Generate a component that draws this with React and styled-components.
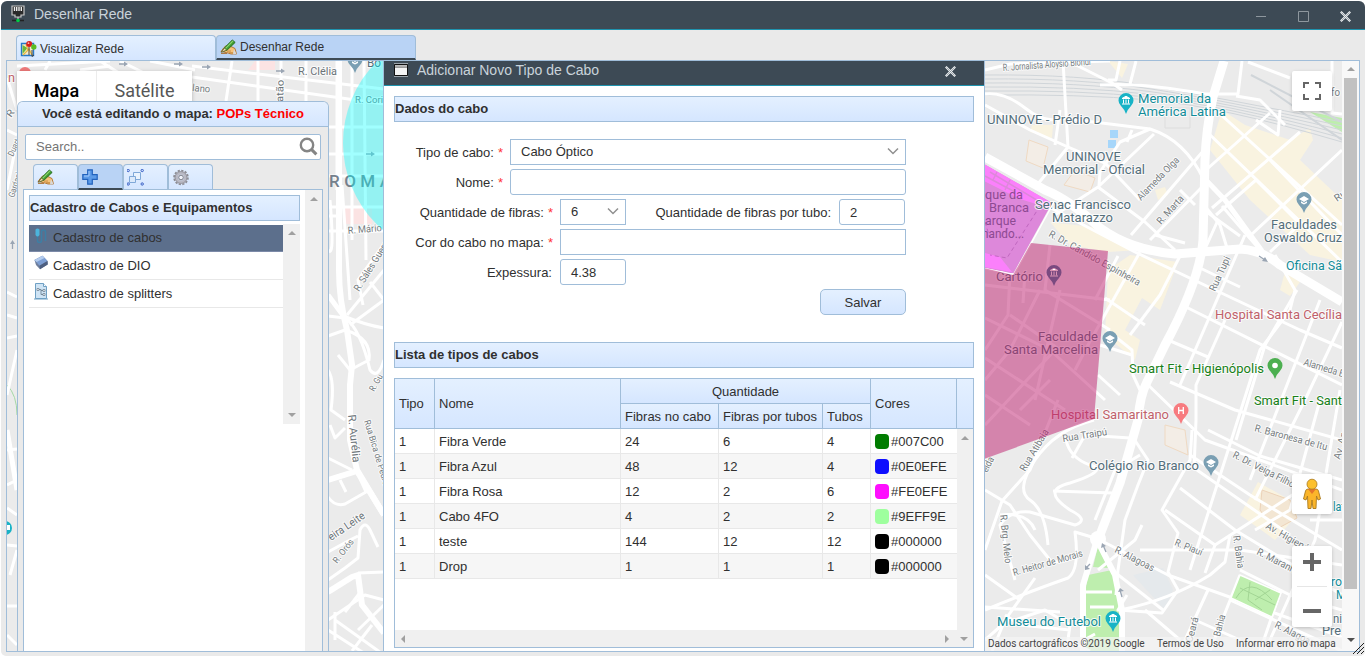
import React from "react";
import styled, { createGlobalStyle, css } from "styled-components";

const line = "#a0bdd9";
const dark = "#3d4a55";
const blueGrad = "linear-gradient(#e4f0ff, #d5e6ff)";

const Global = createGlobalStyle`
  * { box-sizing: border-box; }
  html, body { margin: 0; height: 656px; overflow: hidden; background: #fff; }
  body { font: 13px "Liberation Sans", Arial, sans-serif; color: #303030; }
  svg { display: block; flex: none; }
`;

/* ---------- window ---------- */
const Window = styled.div`
  display: flex;
  flex-direction: column;
  height: 655px;
  margin: 1px 0 0 1px;
  background: #eaeaea;
  border-radius: 6px 6px 5px 5px;
  overflow: hidden;
  position: relative;
`;
const TitleBar = styled.header`
  display: flex;
  align-items: center;
  height: 29px;
  padding: 0 14px 2px 10px;
  background: ${dark};
  border-bottom: 1px solid #1f93ae;
  color: #c9d3da;
  font-size: 14px;
`;
const TitleText = styled.span`
  flex: 1;
  padding-left: ${(p) => p.$gap}px;
`;
const WindowButtons = styled.div`
  display: flex;
  gap: 31px;
  padding-top: 4px;
`;
const TabStrip = styled.nav`
  display: flex;
  height: 30px;
  padding: 5px 0 0 15px;
`;
const Tab = styled.div`
  display: flex;
  align-items: center;
  gap: 3px;
  width: 200px;
  padding: ${(p) => (p.$active ? 0 : 1)}px 3px 0;
  font-size: 12px;
  background: ${(p) => (p.$active ? "#b9d3f5" : blueGrad)};
  border: 1px solid ${line};
  border-radius: 4px 4px 0 0;
  border-bottom: ${(p) => (p.$active ? `2px solid ${dark}` : "0")};
`;
const Content = styled.main`
  display: flex;
  height: 592px;
  margin: 0 5px;
  border: 1px solid ${line};
`;
const Viewport = styled.div`
  position: relative;
  flex: 1;
  overflow: hidden;
`;

/* ---------- scrollbars ---------- */
const VScroll = styled.div`
  display: flex;
  flex-direction: column;
  align-items: center;
  width: ${(p) => p.$w || 17}px;
  background: #f0f0f0;
  padding: 7px 0;
  justify-content: space-between;
`;
const HScroll = styled.div`
  display: flex;
  align-items: center;
  justify-content: space-between;
  height: 17px;
  padding: 0 5px 0 6px;
  background: #f0f0f0;
`;
const HScrollEnd = styled.div`
  display: flex;
  align-items: center;
  gap: 11px;
`;
const PageScroll = styled(VScroll)`
  background: #f8f8f8;
  justify-content: flex-start;
  padding: 6px 0;
`;
const Thumb = styled.div`
  width: 13px;
  height: 511px;
  margin: 7px 0 49px;
  background: #c1c1c1;
`;
const Arrow = styled.i`
  width: 0;
  height: 0;
  border: 4px solid transparent;
  ${(p) => p.$dir === "up" && css`border-top: 0; border-bottom-color: #a0a0a0;`}
  ${(p) => p.$dir === "down" && css`border-bottom: 0; border-top-color: ${p.$dark ? "#505050" : "#a0a0a0"};`}
  ${(p) => p.$dir === "left" && css`border-left: 0; border-right-color: #a0a0a0;`}
  ${(p) => p.$dir === "right" && css`border-right: 0; border-left-color: #a0a0a0;`}
`;

/* ---------- map controls ---------- */
const MapSvg = styled.svg`
  position: absolute;
  inset: 0;
  font-family: Roboto, sans-serif;
`;
const MapTypes = styled.div`
  position: absolute;
  left: 10px;
  top: 10px;
  display: flex;
  height: 40px;
  background: #fff;
  box-shadow: 0 1px 4px rgba(0, 0, 0, 0.25);
  font: 18px/39px Roboto, sans-serif;
`;
const MapType = styled.span`
  width: ${(p) => p.$w}px;
  text-align: center;
  color: ${(p) => (p.$on ? "#000" : "#565656")};
  font-weight: ${(p) => (p.$on ? 500 : 400)};
  border-right: ${(p) => (p.$on ? "1px solid #ececec" : "0")};
`;
const MapControls = styled.div`
  position: absolute;
  right: 10px;
  top: 10px;
  bottom: 24px;
  width: 40px;
  display: flex;
  flex-direction: column;
  justify-content: flex-end;
  gap: 32px;
`;
const ControlBox = styled.div`
  display: flex;
  flex-direction: column;
  align-items: center;
  justify-content: space-around;
  height: ${(p) => p.$h || 40}px;
  margin-bottom: ${(p) => (p.$first ? "auto" : 0)};
  background: #fff;
  border-radius: 2px;
  box-shadow: 0 1px 4px -1px rgba(0, 0, 0, 0.3);
`;
const ControlLine = styled.div`
  width: 30px;
  height: 1px;
  background: #e6e6e6;
`;
const Attribution = styled.footer`
  position: absolute;
  right: 0;
  bottom: 0;
  display: flex;
  width: 358px;
  height: 14px;
  background: rgba(245, 245, 245, 0.7);
  font: 10px/14px Roboto, sans-serif;
  letter-spacing: -0.02px;
  color: #444;
  white-space: nowrap;
`;
const Credit = styled.span`
  width: ${(p) => p.$w}px;
  padding-left: ${(p) => p.$pad}px;
`;

/* ---------- side panel ---------- */
const Side = styled.aside`
  position: absolute;
  left: 10px;
  top: 40px;
  width: 312px;
  height: 550px;
  display: flex;
  flex-direction: column;
  background: #eaeaea;
  border: 1px solid ${line};
  border-bottom: 0;
  border-radius: 6px 6px 0 0;
`;
const SideHeader = styled.div`
  height: 25px;
  line-height: 23px;
  text-align: center;
  font-weight: bold;
  background: ${blueGrad};
  border-bottom: 1px solid ${line};
  border-radius: 5px 5px 0 0;
`;
const MapName = styled.span`
  color: #f00;
`;
const Search = styled.div`
  display: flex;
  align-items: center;
  justify-content: space-between;
  height: 26px;
  margin: 7px 7px 4px;
  padding: 0 2px 1px 10px;
  color: #757575;
  background: #fff;
  border: 1px solid ${line};
  border-radius: 2px;
`;
const ToolTabs = styled.div`
  display: flex;
  height: 25px;
  margin-left: 15px;
`;
const ToolTab = styled.div`
  width: 45px;
  height: ${(p) => (p.$active ? 26 : 25)}px;
  padding: 4px 0 0 3px;
  background: ${(p) => (p.$active ? "#b9d3f5" : blueGrad)};
  border: 1px solid ${line};
  border-bottom: ${(p) => (p.$active ? `2px solid ${dark}` : "0")};
  border-radius: 4px 4px 0 0;
  position: relative;
  z-index: 1;
`;
const SideBody = styled.div`
  display: flex;
  flex: 1;
  margin: 0 5px;
  background: #fff;
  border: 1px solid ${line};
  border-bottom: 0;
`;
const SideMain = styled.div`
  flex: 1;
  padding: 5px 5px 0;
`;
const Heading = styled.h2`
  height: 26px;
  margin: 0;
  font-size: 13px;
  line-height: 24px;
  background: ${blueGrad};
  border: 1px solid ${line};
`;
const ListBox = styled.div`
  display: flex;
  height: 200px;
  margin-top: 3px;
`;
const List = styled.div`
  flex: 1;
  padding-top: 1px;
`;
const Item = styled.div`
  display: flex;
  gap: 4px;
  height: ${(p) => (p.$selected ? 27 : 28)}px;
  padding: 3px 0 0 4px;
  line-height: 19px;
  background: ${(p) => (p.$selected ? "#5c6f8c" : "#fff")};
  border-bottom: 1px solid ${(p) => (p.$selected ? "#7c8aa8" : "#e8e8e8")};
`;
const ItemText = styled.span`
  padding-top: ${(p) => (p.$selected ? 0 : 1)}px;
`;

/* ---------- dialog ---------- */
const Dialog = styled.section`
  position: absolute;
  left: 376px;
  top: 0;
  width: 602px;
  height: 590px;
  background: #fff;
  border: 1px solid ${line};
  border-width: 0 1px;
`;
const DialogBar = styled.div`
  display: flex;
  height: 25px;
  padding: 2px 28px 0 10px;
  background: ${dark};
  border-bottom: 1px solid #1f93ae;
  color: #c9d3da;
  font-size: 14px;
  line-height: 15px;
`;
const CloseSlot = styled.div`
  padding-top: 3px;
`;
const DialogBody = styled.div`
  padding: 10px;
`;
const Form = styled.div`
  display: flex;
  flex-direction: column;
  gap: 4px;
  width: 512px;
  margin: 17px 0 27px;
`;
const Row = styled.div`
  display: flex;
  height: 26px;
`;
const Label = styled.label`
  width: ${(p) => p.$w}px;
  padding-right: ${(p) => p.$pad || 7}px;
  line-height: 28px;
  text-align: right;
  white-space: nowrap;
`;
const Star = styled.span`
  padding-left: 4px;
  color: #f33;
`;
const Field = styled.div`
  display: flex;
  align-items: center;
  justify-content: space-between;
  width: ${(p) => p.$w}px;
  padding: 0 6px ${(p) => (p.$square ? 2 : 0)}px 10px;
  border: 1px solid ${line};
  border-radius: ${(p) => (p.$square ? 0 : 3)}px;
  background: #fff;
`;
const SaveButton = styled.button`
  width: 86px;
  height: 26px;
  margin-left: auto;
  padding: 0;
  font: inherit;
  color: inherit;
  background: ${blueGrad};
  border: 1px solid ${line};
  border-radius: 5px;
`;

/* ---------- grid ---------- */
const columns = "40px 186px 98px 104px 48px 86px";
const Grid = styled.div`
  display: flex;
  flex-direction: column;
  height: 270px;
  margin-top: 10px;
  border: 1px solid ${line};
`;
const GridHead = styled.div`
  display: grid;
  grid-template-columns: ${columns} 16px;
  grid-template-rows: 25px 25px;
  background: ${blueGrad};
`;
const HeadCell = styled.div`
  display: flex;
  align-items: center;
  justify-content: ${(p) => (p.$center ? "center" : "flex-start")};
  grid-column: ${(p) => p.$col};
  grid-row: ${(p) => p.$row};
  padding-left: ${(p) => (p.$center ? 0 : 4)}px;
  white-space: nowrap;
  background: ${(p) => (p.$sub ? blueGrad : "none")};
  border: solid ${line};
  border-width: 0 ${(p) => (p.$last ? 0 : 1)}px 1px 0;
`;
const GridBody = styled.div`
  display: flex;
  flex: 1;
`;
const GridRows = styled.div`
  width: 562px;
`;
const GridRow = styled.div`
  display: grid;
  grid-template-columns: ${columns};
  height: 25px;
  background: ${(p) => (p.$odd ? "#f6f6f6" : "#fff")};
`;
const Cell = styled.div`
  display: flex;
  align-items: center;
  gap: 2px;
  padding-left: 4px;
  border: solid #e8e8e8;
  border-width: 0 ${(p) => (p.$last ? 0 : 1)}px 1px 0;
`;
const Swatch = styled.span`
  width: 14px;
  height: 15px;
  border-radius: 4px;
  background: ${(p) => p.$color};
`;

const cables = [
  ["1", "Fibra Verde", "24", "6", "4", "#007C00"],
  ["1", "Fibra Azul", "48", "12", "4", "#0E0EFE"],
  ["1", "Fibra Rosa", "12", "2", "6", "#FE0EFE"],
  ["1", "Cabo 4FO", "4", "2", "2", "#9EFF9E"],
  ["1", "teste", "144", "12", "12", "#000000"],
  ["1", "Drop", "1", "1", "1", "#000000"],
];

/* ---------- icons ---------- */
const PortIcon = () => (
  <svg width="14" height="18" viewBox="0 0 14 18">
    <path d="M1 1h12v9h-3v2H4v-2H1z" fill="#2a2a2a" stroke="#c8c8c8" strokeWidth="1.2" />
    <path d="M3.5 2v4M5.7 2v4M8 2v4M10.3 2v4" stroke="#eee" strokeWidth="1.4" />
    <path d="M7 12v3" stroke="#ddd" />
    <path d="M1 15.5h12" stroke="#222" strokeWidth="1.3" />
    <circle cx="7" cy="15.5" r="1.8" fill="#0c4" />
  </svg>
);
const WinIcon = () => (
  <svg width="14" height="14" viewBox="0 0 14 14">
    <path d="M0 .5h14M0 13.5h14" stroke="#9aa3aa" />
    <path d="M.5 1.5h13v11H.5z" fill="#f4f4f4" stroke="#111" />
    <path d="M1 3h12" stroke="#aaa" strokeWidth="1.5" />
    <path d="M1 4.3h12" stroke="#555" strokeWidth=".7" />
  </svg>
);
const CloseIcon = () => (
  <svg width="11" height="11" viewBox="0 0 11 11">
    <path d="M.8 .8l9.400 9.400M10.200 .8L.8 10.200" stroke="#eef1f3" strokeWidth="2.200" />
    <path d="M1.500 1.500l8 8M9.500 1.500l-8 8" stroke="#8c959c" strokeWidth=".8" />
  </svg>
);
const Chevron = () => (
  <svg width="12" height="8" viewBox="0 0 12 8">
    <path d="M1 1.500l5 5 5-5" fill="none" stroke="#909090" strokeWidth="1.5" />
  </svg>
);
const MapPinsIcon = () => (
  <svg width="17" height="16" viewBox="0 0 17 16">
    <path d="M1.5 2.5h12v12h-12z" fill="#f4ead0" stroke="#2878c8" strokeWidth="1.4" />
    <path d="M2.5 4l5 3-5 6z" fill="#6cb83c" />
    <path d="M3 14l6-6 3 6M6 3l2 7" stroke="#e9b93c" fill="none" strokeWidth="1.2" />
    <path d="M9 14V6M14 14l-2 1.5V9" stroke="#444" fill="none" />
    <circle cx="9.2" cy="3" r="3" fill="#d8201e" />
    <circle cx="13.8" cy="6" r="2.7" fill="#5cbc22" />
    <circle cx="8.5" cy="2.2" r=".9" fill="#ffb0a8" />
  </svg>
);
const HandPencilIcon = () => (
  <svg width="17" height="16" viewBox="0 0 17 16">
    <path d="M1 12.500L4 8.500Q5.500 6.500 8 6.500L12 8l3 1.500 1.500 5.500H11L8 14z" fill="#f6c27a" stroke="#a8641c" strokeWidth=".8" />
    <path d="M7 12.200l4-.2M9 13.700h4" stroke="#b97a30" strokeWidth=".7" />
    <path d="M14 10l2.500 5-3.500.2z" fill="#d8d8d8" />
    <path d="M4.500 8.800L12.300.9l2.900 2.500L7 11.200l-5.500 1.800z" fill="#3f9c33" stroke="#1f6418" strokeWidth=".8" />
    <path d="M5.600 9.300l7.400-7.400" stroke="#8fd670" strokeWidth="1.100" />
    <path d="M1 13.300l3.500-4.100L6.600 11z" fill="#f3dfb4" stroke="#6b4a1c" strokeWidth=".5" />
    <path d="M1 14.500h6" stroke="#a8641c" strokeWidth=".8" />
  </svg>
);
const PlusIcon = () => (
  <svg width="16" height="16" viewBox="0 0 16 16">
    <path d="M5.7.8h4.6v4.9h4.9v4.6h-4.9v4.9H5.7v-4.9H.8V5.7h4.9z" fill="#5c9be8" stroke="#2363bd" strokeWidth="1.2" />
    <path d="M7 2v5H2" stroke="#a5cbfa" fill="none" />
  </svg>
);
const SelectionIcon = () => (
  <svg width="17" height="17" viewBox="0 0 17 17">
    <path d="M6.500 3.500h7v7h-7z" fill="#eaf3fd" stroke="#7fa8d8" />
    <path d="M2.500 7.500h6v6h-6z" fill="#dbe9fa" stroke="#7fa8d8" />
    {[[1, 1], [15, 1], [1, 14.5], [15, 14.5]].map(([x, y]) => (
      <circle key={`${x}-${y}`} cx={x + 0.2} cy={y + 0.5} r="1.200" fill="#d9e8ff" stroke="#2d55c0" strokeWidth=".9" />
    ))}
  </svg>
);
const GearIcon = () => (
  <svg width="18" height="17" viewBox="-1 0 18 17">
    <circle cx="8" cy="8.500" r="6.800" fill="none" stroke="#8c8c94" strokeWidth="2" strokeDasharray="2.200 1.360" />
    <circle cx="8" cy="8.500" r="4.600" fill="none" stroke="#b9b9c4" strokeWidth="3.400" />
    <circle cx="8" cy="8.500" r="5.900" fill="none" stroke="#85858c" strokeWidth=".7" />
    <circle cx="8" cy="8.500" r="2.300" fill="#f0f3fa" stroke="#6f6f78" strokeWidth=".9" />
  </svg>
);
const SearchIcon = () => (
  <svg width="19" height="19" viewBox="0 0 19 19">
    <circle cx="8" cy="8" r="6.2" fill="none" stroke="#858585" strokeWidth="2.4" />
    <path d="M12.4 12.4l5 5" stroke="#858585" strokeWidth="3" />
  </svg>
);
const CableIcon = () => (
  <svg width="16" height="16" viewBox="0 0 16 16">
    <path d="M4.500 8v4.500q0 2 2 2t2-2V4q0-2 2-2t2 2v9" fill="none" stroke="#3c7fa5" strokeWidth="1.500" />
    <path d="M2.500 1.500q2-2 4 0v5.500q-2 3-4 0z" fill="#4cb4dc" />
  </svg>
);
const DioIcon = () => (
  <svg width="16" height="16" viewBox="0 0 16 16">
    <path d="M1.500 5L9.500 .8l5 5.200.2 3.500L7 14.200 3 10z" fill="#6f7f9c" />
    <path d="M1.500 5L9.500 .8l5 5.200L6.500 10.700z" fill="#7d9fd4" />
    <path d="M1.500 5L9.500 .8l2 2.200L3.500 7z" fill="#b4ccee" />
    <path d="M6.500 10.700l8-4.700.2 3.500L7 14.200z" fill="#4d5f80" />
  </svg>
);
const SplitterIcon = () => (
  <svg width="16" height="17" viewBox="0 0 16 17">
    <path d="M2.500.500h8l3 3v12h-11z" fill="#cfe4f5" stroke="#6fa0c4" />
    <path d="M10.500.500v3h3" fill="#fff" stroke="#6fa0c4" />
    <path d="M5 6.500h3v5h2M8 7.500h2" fill="none" stroke="#66798a" strokeWidth=".8" />
    <path d="M4 5.500h2v2H4zM10 6.500h2v2h-2zM10 10.500h2v2h-2z" fill="#fff" stroke="#66798a" strokeWidth=".7" />
    <path d="M1 16h14" stroke="#6fa0c4" />
  </svg>
);

/* ---------- map drawing ---------- */
const thinRoads = [
  // north-east
  "M985 70L1010 64L1110 61", "M985 94Q1005 92 1025 108T1060 118L1110 124L1150 129Q1185 140 1204 180",
  "M985 105L1030 130L1068 147L1105 163L1140 200", "M1063 61L1068 147M1060 110L1055 145",
  "M1068 61L1112 83L1122 90M1120 61L1116 80L1108 80M1136 61L1130 84", "M1100 85Q1140 82 1205 94",
  "M1242 61L1238 94L1205 94", "M1248 62L1290 78", "M1332 61L1332 113L1342 114", "M1236 96L1260 100L1285 125",
  "M1205 130L1342 262", "M1218 112L1342 225", "M1342 150L1252 234M1300 132L1212 208M1270 113L1206 170",
  "M1150 129L1120 142L1100 172L1099 185M1132 130L1127 142M1154 134L1098 187L1055 215",
  "M1098 187L1145 222L1175 250M1204 150L1131 235M1204 185L1150 240M1180 190L1195 205",
  "M1068 147L1037 185", "M1045 205L1030 197L1135 252L1215 290L1300 330L1342 348", "M1140 252L1088 345L1075 370",
  "M1118 256L1095 300M1180 256L1160 295L1130 335M1204 210L1240 236M1155 235L1185 243",
  "M1204 205L1220 225L1227 248M1222 206L1260 250M1216 215L1256 180L1300 224L1270 252", "M1280 110L1278 135L1256 120M1270 160L1342 235",
  // centre-east
  "M1200 268L1240 287M1245 235L1180 385M1218 220L1200 260", "M1184 306L1342 385",
  "M1275 255L1295 290L1290 310L1260 350L1190 570", "M1297 290L1265 345L1236 440M1320 300L1250 480M1342 322L1305 400L1255 500",
  "M1168 340L1208 357M1225 320L1196 385L1196 420L1194 470", "M1145 382L1205 440L1342 490",
  "M1170 382L1235 410L1342 440M1208 430L1260 456L1342 480M1197 470L1290 535",
  "M1105 298L1145 325M1107 330L1132 350L1133 375L1140 390", "M1098 375L1120 395M1100 345L1132 355",
  "M1130 438L1085 435L1072 458M1140 455L1115 470L1095 520", "M1053 491L1113 493",
  "M1340 390L1315 540L1265 651M1320 400L1290 510L1255 530", "M1342 520L1310 520", "M1342 565L1240 550L1140 550",
  // south-east
  "M985 490L1010 505L1030 535L1050 560Q1060 565 1080 555", "M1058 400L1030 470L1002 501L985 550",
  "M1094 420Q1055 430 1035 460T1030 500T1048 545", "M1066 440Q1070 458 1090 465Q1110 470 1070 483Q1040 490 1070 510Q1090 520 1075 525L1030 512Q1010 510 1000 525L1015 580",
  "M1000 515Q1028 512 1035 530", "M1095 538L1075 532Q1080 570 1068 578Q1020 595 985 610", "M985 607L1060 612M1035 578L1005 620L992 651M985 575L1020 600",
  "M1100 540L1168 575L1342 637", "M1134 439L1148 460L1138 485L1125 520L1118 570L1116 595",
  "M1127 595L1118 610L1162 613L1178 590L1168 572L1178 533L1162 510L1190 460L1192 430",
  "M1112 570L1163 610M1120 610Q1170 600 1210 575L1225 562L1230 535", "M1215 545L1300 490M1190 455L1250 495L1342 550",
  "M1180 488L1235 530L1342 595M1165 510L1215 545L1205 573", "M1240 570L1290 595L1342 610M1240 575L1210 651M1208 590L1180 651",
  "M1281 590L1260 651M1230 600L1342 651M1195 620L1240 640M1145 610L1180 640",
  "M1098 570L1135 540L1142 525M1015 620L1045 610L1070 625L1068 640L1090 651M1005 615L1020 625L1070 630M985 640L1010 618",
  // under the maroon area
  "M985 285L1110 300M1010 272L1008 315L985 350M1010 315L1060 350M985 380L1010 350L1040 290M985 318L1050 350L1105 400",
  "M1025 272L1023 303M1050 245L1045 290L1110 330M1055 350L985 425M985 358L1065 410M1020 410L1050 380M985 395L1030 425M1060 290L1035 400",
  // west of the dialog
  "M192 77L384 104M192 66L384 89M258 61L258 101M281 61L281 101M306 61L306 101M337 61L337 190M352 61L352 240M364 61L366 260M232 61L226 101",
  "M328 127H384M328 154H384M328 207H384M328 231H384M328 216L340 216M328 176L384 176M342 185L350 300",
  "M328 250Q335 260 330 200M384 244L358 280L363 305M384 270L347 315M384 300L350 325M370 282L384 300",
  "M341 315Q365 325 384 328M328 316L345 318Q360 328 370 370Q378 380 384 360M328 336L345 330Q372 338 369 360L350 370L338 355",
  "M328 370Q335 380 331 410L345 420M330 425L335 438L345 428M328 458L352 470M328 497Q335 507 345 504L366 492L356 470M340 480L346 492",
  "M328 580L345 568L358 558L360 530Q365 520 370 530L378 547M328 552L350 540L358 536M358 573L384 572M328 620L365 595L384 600",
  "M328 630L384 666M335 612L335 640M335 620L384 655M345 612L362 590M358 630L384 605M352 651L372 625",
  // far west
  "M7 78L17 110M7 130L17 135M7 190L17 140M7 292L17 297M7 315L17 318M7 395L17 350M7 338L17 336M7 450L17 449M7 508L17 515M7 545L17 546M10 575L17 550M7 606L17 606M7 635L17 645M7 485L17 480",
  "M17 66L110 61M50 61L45 70M80 70L110 66M120 61L150 76M100 61L130 80M150 61L195 70",
];
const wideRoads = [
  ["M1224 61L1213 97Q1206 130 1205 160L1203 240Q1200 280 1165 345L1147 382Q1140 395 1138 420L1120 483L1098 540", 9],
  ["M985 157L1045 190Q1070 200 1100 228Q1130 250 1175 254L1240 249Q1262 250 1280 265L1342 302", 9],
  ["M1097 540L1083 585V651", 6], ["M1097 540L1115 575L1122 610V651", 6],
  ["M1262 251L1225 200L1204 178", 5],
  ["M339 61L339 270Q339 300 347 330L352 365L350 385L350 440L357 470L384 515", 6],
  ["M328 480L357 471M357 471L384 515", 6], ["M328 592L352 577L358 575L362 605L384 633", 6],
  ["M328 295L345 318", 5], ["M7 430L17 490", 5],
];
const rails = [0, 4, 8, 12, 16, 20].map(
  (d) => `M985 ${75 + d}Q1080 ${74 + d} 1150 ${86 + d * 0.7}T1342 ${122 + d}`
);
const beige = [
  "M1222 110L1245 125L1290 140L1310 128L1313 140L1300 160L1342 200V262L1310 255L1250 200L1210 150Z",
  "M1050 222L1100 228L1140 250L1108 252L1070 245Z", "M1108 270L1130 255L1178 262L1160 310L1142 298L1125 330L1140 340L1135 360L1105 335Z",
  "M1258 482L1290 500L1297 515L1275 540L1240 515Z", "M1032 125L1053 125L1052 138L1030 132Z", "M1108 61L1128 64L1122 78Z",
  "M1285 272L1300 282L1290 296L1280 290Z", "M1155 190L1165 187L1168 195L1158 200Z",
];

/* label: text, x, y, width, colour, size, rotation */
const grey = "#546e7a";
const street = "#757c80";
const eastLabels = [
  ["UNINOVE - Prédio D", 987, 124, 115, grey, 13],
  ["UNINOVE", 1066, 161, 55, grey, 13], ["Memorial - Oficial", 1043, 174, 102, grey, 13],
  ["Memorial da", 1138, 103, 73, "#128c99", 13], ["América Latina", 1138, 116, 88, "#128c99", 13],
  ["Senac Francisco", 1035, 209, 96, grey, 13], ["Matarazzo", 1052, 222, 61, grey, 13],
  ["que da", 985, 199, 38, grey, 13], ["Branca", 989, 212, 40, grey, 13], ["arque", 985, 225, 31, grey, 13], ["nando...", 982, 238, 42, grey, 13],
  ["Cartório", 996, 281, 47, grey, 13],
  ["Faculdade", 1038, 341, 60, grey, 13], ["Santa Marcelina", 1004, 354, 94, grey, 13],
  ["Faculdades", 1271, 229, 66, grey, 13], ["Oswaldo Cruz", 1264, 242, 78, grey, 13],
  ["Oficina Sã", 1286, 270, 56, "#128c99", 13],
  ["Hospital Santa Cecília", 1215, 319, 127, "#c0616a", 13],
  ["Smart Fit - Higienópolis", 1129, 373, 135, "#188018", 13],
  ["Smart Fit - Sant", 1254, 405, 88, "#188018", 13],
  ["Hospital Samaritano", 1051, 419, 118, "#c0616a", 13],
  ["Colégio Rio Branco", 1089, 470, 110, grey, 13],
  ["Museu do Futebol", 997, 626, 104, "#128c99", 13],
  ["lat", 1333, 511, 12, "#128c99", 13], ["ro", 1331, 586, 11, "#128c99", 13], ["M", 1336, 599, 10, "#128c99", 13],
  ["ni", 1333, 623, 9, grey, 13], ["Pre", 1322, 635, 19, grey, 13], ["fo I", 1331, 96, 14, street, 10],
  ["R. Jornalista Aloysio Biondi", 1003, 71, 88, street, 10, -4],
  ["Alameda Olga", 1141, 201, 56, street, 10, -46], ["R. Marta", 1161, 225, 35, street, 10, -48],
  ["R. Dr. Cândido Espinheira", 1048, 236, 103, street, 10, 29],
  ["Rua Tupi", 1215, 292, 37, street, 10, -65], ["Alameda E", 1303, 365, 42, street, 10, 17],
  ["Rua Traipú", 1063, 442, 45, street, 10, -9], ["Rua Atibaia", 1025, 472, 47, street, 10, -59],
  ["R. Baronesa de Itu", 1254, 431, 75, street, 10, 15], ["R. Dr. Veiga Filho", 1232, 457, 68, street, 10, 27],
  ["Av. An", 1340, 460, 28, street, 10, -75], ["Ru", 1337, 202, 12, street, 10, -35],
  ["Av. Higienó", 1265, 528, 48, street, 10, 30], ["R. Bahia", 1233, 536, 33, street, 10, 82],
  ["R. Maranh", 1256, 554, 42, street, 10, 27], ["R. Piauí", 1174, 545, 29, street, 10, 22],
  ["R. Alagoas", 1114, 552, 43, street, 10, 27], ["R. Alagoas", 1274, 627, 43, street, 10, 27],
  ["R. Brg. Melo", 1000, 515, 49, street, 10, 84], ["R. Heitor de Morais", 1014, 576, 72, street, 10, -16],
  ["Ceará", 1192, 643, 26, street, 10, -75], ["Bahia", 1220, 637, 22, street, 10, -76], ["eida", 987, 473, 16, street, 10, -62],
];
const westLabels = [
  ["R. Clélia", 298, 75, 39, "#6b7378", 10], ["lano", 192, 91, 18, street, 10, 5], ["atão", 283, 102, 22, "#6b7378", 10, -88],
  ["Bo", 367, 67, 14, grey, 13], ["R. Cori", 355, 103, 28, street, 9],
  ["R. Mário", 348, 234, 34, street, 10, -5], ["R. Sáles Guerra", 359, 292, 60, street, 10, -58],
  ["R. Aurélia", 348, 415, 48, "#6b7378", 11, 84], ["Rua Bica de Pedra", 364, 421, 68, street, 9, 73],
  ["eira Leite", 331, 541, 42, "#6b7378", 11, -34], ["R. Orós", 337, 564, 28, street, 9, -52], ["R. Gu", 374, 392, 18, street, 9, -60],
  ["n", 8, 82, 7, "#c0616a", 13], ["R", 11, 118, 7, street, 10, -55], ["Duart", 13, 157, 18, street, 9, -65], ["Gardani", 14, 198, 26, street, 9, -72],
];

const pins = [
  [1126, 101, "#18b3c6", "museum"], [1304, 200, "#7a9fb3", "school"], [1054, 273, "#7a4a80", "museum"],
  [1110, 339, "#7a9fb3", "school"], [1275, 366, "#4caf50", "dot"], [1181, 411, "#f77b7f", "H"],
  [1211, 463, "#7a9fb3", "school"], [1113, 619, "#18b3c6", "museum"], [355, 60, "#7a9fb3", "school"],
];

const Pin = ({ x, y, color, kind }) => (
  <g transform={`translate(${x} ${y})`}>
    <path d="M0 13Q-1 9-5 5Q-7.500 2.500-7.500-.5A7.500 7.500 0 0 1 7.500-.5Q7.500 2.500 5 5Q1 9 0 13z" fill={color} />
    {kind === "dot" && <circle r="2.800" cy="-.5" fill="#fff" />}
    {kind === "H" && <path d="M-2.300-4V3M2.300-4V3M-2.300-.5H2.300" stroke="#fff" strokeWidth="1.300" />}
    {kind === "school" && <path d="M-5-1L0-4L5-1L0 2zM-3 1.300V3L0 4.500L3 3V1.300L0 3z" fill="#fff" />}
    {kind === "museum" && <path d="M-4-2.500L0-4.800L4-2.500zM-2.500-1.500V2.500M0-1.500V2.500M2.500-1.500V2.500M-4 3H4" fill="#fff" stroke={color === "#7a4a80" ? "#d78fb0" : "#fff"} strokeWidth="1" />}
  </g>
);

const MapLabel = ({ data: [text, x, y, w, color, size, rot = 0] }) => (
  <text
    transform={`translate(${x} ${y}) rotate(${rot})`}
    fontSize={size}
    textLength={w}
    lengthAdjust="spacingAndGlyphs"
    fill={color}
    stroke="#fff"
    strokeWidth="2"
    strokeOpacity=".8"
    strokeLinejoin="round"
    paintOrder="stroke"
  >
    {text}
  </text>
);

const CityMap = () => (
  <MapSvg width="1335" height="590" viewBox="7 61 1335 590">
    <rect x="7" y="61" width="1335" height="590" fill="#ebebeb" />
    {beige.map((d) => <path key={d} d={d} fill="#f9f3e0" />)}
    <path d="M1029 140L1048 147L1043 168L1026 161zM1075 170L1095 178L1090 192L1064 185zM1165 425L1185 430L1188 455L1165 445z" fill="#f3ede6" stroke="#efd9c2" />
    <path d="M1262 490L1290 500L1297 518L1275 530L1260 510z" fill="#f3e6d3" stroke="#ecd2b8" />
    <path d="M1165 108H1190V128H1165z" fill="none" stroke="#ddd" />
    <path d="M1110 130h8v8h-8zM1108 140h8v8h-8z" fill="#a6d6fa" />
    <path d="M1310 112L1342 118V132z" fill="#beeeae" />
    <path d="M1098 546L1108 568L1093 567zM1088 575L1112 570L1122 600V651H1084V600z" fill="#beeeae" />
    <path d="M1133 575L1163 568L1173 590L1165 610z" fill="#e5e9ec" />
    <path d="M255 61H275V70H248zM345 207H372V224H345z" fill="#fbe3e3" />
    <path d="M7 385Q17 395 17 415" stroke="#a5d8a5" fill="none" />
    {rails.map((d) => <path key={d} d={d} fill="none" stroke="#d0d5d9" />)}
    <path d="M1251 75L1342 122M1270 90L1342 140" stroke="#d0d5d9" strokeWidth="2" />
    {thinRoads.map((d) => <path key={d} d={d} fill="none" stroke="#fff" strokeWidth="3" strokeLinejoin="round" />)}
    {wideRoads.map(([d, w]) => <path key={d} d={d} fill="none" stroke="#fff" strokeWidth={w} strokeLinejoin="round" />)}
    <circle cx="1098" cy="539" r="8" fill="#fff" />
    <path d="M1084 592H1112M1090 607H1114M1084 640L1095 634" stroke="#fff" strokeWidth="3" />
    <path d="M1240 575L1281 593L1272 617L1231 598z" fill="#beeeae" stroke="#fff" strokeWidth="1.500" />
    <path d="M1240 588L1275 605M1250 582L1248 600L1262 610M1270 590L1255 600M1236 598Q1250 575 1272 600" stroke="#a2d594" fill="none" />
    <g stroke="#9aa5b3" strokeWidth="1.300" fill="#9aa5b3">
      <path d="M119 64H126M174 64H181M202 67H209M276 71H283M366 154H373M12.500 249V242M1259 256L1265 260M1086 568L1090 564M1122 597L1120 590M1106 552L1103 545" />
      <path d="M124 61.500L128 64L124 66.500zM179 61.500L183 64L179 66.500zM207 64.500L211 67L207 69.500zM281 68.500L285 71L281 73.500zM371 151.500L375 154L371 156.500zM10 244L12.500 240L15 244zM1262 261L1268 262L1265 257zM1085 565V570L1090 569zM1118 592L1120 588L1124 591zM1101 548L1102 543L1106 546z" stroke="none" />
    </g>
    <circle cx="25" cy="73" r="6" fill="#ef7a7a" />
    <circle cx="5" cy="528" r="7" fill="#18b3c6" />
    <path d="M7 525h3v5h-3z" fill="#fff" />
    <path d="M984 164L1052 203L1013 274L984 268z" fill="#dd88da" />
    <path d="M984 164L1052 203L1049 208L1020 199L984 181zM985 253L1000 257L1012 272L984 267z" fill="#fb80fb" />
    <path d="M990 172L1040 202M985 176L1015 192M997 172L993 180M1010 180L1005 190" stroke="#dd88da" strokeWidth="1.500" fill="none" />
    <path d="M1040 206L1007 258L990 255M1008 228L1000 238M985 222L990 238" stroke="#b45ab4" strokeOpacity=".7" strokeDasharray="4 3" fill="none" />
    {eastLabels.map((l, i) =>
      i >= 7 && i <= 10 ? (
        <text key={i} x={l[1]} y={l[2]} textLength={l[3]} lengthAdjust="spacingAndGlyphs" fontSize="13" fill="#8d4a92">{l[0]}</text>
      ) : (
        <MapLabel key={i} data={l} />
      )
    )}
    {westLabels.map((l, i) => <MapLabel key={i} data={l} />)}
    <text x="329" y="187" fontSize="17" fontWeight="500" textLength="62" fill="#75808c">ROMA</text>
    <circle cx="458" cy="143" r="115" fill="#00ffff" fillOpacity=".37" />
    <path d="M1054 202L1014 274.500L984 268.500" stroke="#fff" strokeWidth="1.500" fill="none" />
    <path d="M1031 243L1108 251L1094 419L984 459V268L1013 275z" fill="#be1e6e" fillOpacity=".5" />
    {pins.map(([x, y, c, k]) => <Pin key={x} x={x} y={y} color={c} kind={k} />)}
  </MapSvg>
);

const Fullscreen = () => (
  <svg width="18" height="18" viewBox="0 0 18 18">
    <path d="M1 6V1H6M12 1H17V6M17 12V17H12M6 17H1V12" fill="none" stroke="#666" strokeWidth="2" />
  </svg>
);
const Pegman = () => (
  <svg width="18" height="32" viewBox="0 0 18 32">
    <path d="M5 11h8q2 0 2.500 2l2 8-2.500 1-1.500-4-.5 12.500H10L9 22l-1 8.500H5L4.500 18 3 22 .5 21l2-8Q3 11 5 11z" fill="#fbb52a" stroke="#a9791c" strokeWidth=".9" />
    <path d="M5 11l4 5 4-5z" fill="#e5752a" />
    <circle cx="9" cy="6.200" r="5" fill="#fcc02d" stroke="#a9791c" strokeWidth=".8" />
  </svg>
);
const ZoomSign = ({ plus }) => (
  <svg width="18" height="18" viewBox="0 0 18 18">
    <path d={plus ? "M0 9H18M9 0V18" : "M0 9H18"} stroke="#666" strokeWidth="4" />
  </svg>
);
const Grip = styled.svg`
  position: absolute;
  right: 0;
  bottom: 1px;
`;

const tools = [HandPencilIcon, PlusIcon, SelectionIcon, GearIcon];
const items = [[CableIcon, "Cadastro de cabos"], [DioIcon, "Cadastro de DIO"], [SplitterIcon, "Cadastro de splitters"]];

export default function App() {
  return (
    <>
      <Global />
      <Window>
        <TitleBar>
          <PortIcon />
          <TitleText $gap={9}>Desenhar Rede</TitleText>
          <WindowButtons>
            <svg width="11" height="11"><path d="M0 5.500H10" stroke="#8e979e" /></svg>
            <svg width="11" height="11"><path d="M.5.500H10.500V10.500H.5z" fill="none" stroke="#8e979e" /></svg>
            <CloseIcon />
          </WindowButtons>
        </TitleBar>
        <TabStrip>
          <Tab><MapPinsIcon />Visualizar Rede</Tab>
          <Tab $active><HandPencilIcon />Desenhar Rede</Tab>
        </TabStrip>
        <Content>
          <Viewport>
            <CityMap />
            <MapTypes>
              <MapType $on $w={80}>Mapa</MapType>
              <MapType $w={95}>Satélite</MapType>
            </MapTypes>
            <MapControls>
              <ControlBox $first><Fullscreen /></ControlBox>
              <ControlBox><Pegman /></ControlBox>
              <ControlBox $h={81}>
                <ZoomSign plus />
                <ControlLine />
                <ZoomSign />
              </ControlBox>
            </MapControls>
            <Attribution>
              <Credit $w={167} $pad={4}>Dados cartográficos ©2019 Google</Credit>
              <Credit $w={80} $pad={6}>Termos de Uso</Credit>
              <Credit $w={110} $pad={5}>Informar erro no mapa</Credit>
            </Attribution>
            <Side>
              <SideHeader>Você está editando o mapa: <MapName>POPs Técnico</MapName></SideHeader>
              <Search>Search..<SearchIcon /></Search>
              <ToolTabs>
                {tools.map((Icon, i) => <ToolTab key={i} $active={i === 1}><Icon /></ToolTab>)}
              </ToolTabs>
              <SideBody>
                <SideMain>
                  <Heading>Cadastro de Cabos e Equipamentos</Heading>
                  <ListBox>
                    <List>
                      {items.map(([Icon, text], i) => (
                        <Item key={text} $selected={i === 0}>
                          <Icon />
                          <ItemText $selected={i === 0}>{text}</ItemText>
                        </Item>
                      ))}
                    </List>
                    <VScroll><Arrow $dir="up" /><Arrow $dir="down" /></VScroll>
                  </ListBox>
                </SideMain>
                <VScroll><Arrow $dir="up" /></VScroll>
              </SideBody>
            </Side>
            <Dialog>
              <DialogBar>
                <WinIcon />
                <TitleText $gap={9}>Adicionar Novo Tipo de Cabo</TitleText>
                <CloseSlot><CloseIcon /></CloseSlot>
              </DialogBar>
              <DialogBody>
                <Heading>Dados do cabo</Heading>
                <Form>
                  <Row>
                    <Label $w={116}>Tipo de cabo:<Star>*</Star></Label>
                    <Field $w={396} $square>Cabo Óptico<Chevron /></Field>
                  </Row>
                  <Row>
                    <Label $w={116}>Nome:<Star>*</Star></Label>
                    <Field $w={396} />
                  </Row>
                  <Row>
                    <Label $w={166}>Quantidade de fibras:<Star>*</Star></Label>
                    <Field $w={66} $square>6<Chevron /></Field>
                    <Label $w={213} $pad={8}>Quantidade de fibras por tubo:</Label>
                    <Field $w={66}>2</Field>
                  </Row>
                  <Row>
                    <Label $w={166}>Cor do cabo no mapa:<Star>*</Star></Label>
                    <Field $w={346} $square />
                  </Row>
                  <Row>
                    <Label $w={166} $pad={8}>Expessura:</Label>
                    <Field $w={66}>4.38</Field>
                  </Row>
                  <Row><SaveButton>Salvar</SaveButton></Row>
                </Form>
                <Heading>Lista de tipos de cabos</Heading>
                <Grid>
                  <GridHead>
                    <HeadCell $col="1" $row="1 / 3">Tipo</HeadCell>
                    <HeadCell $col="2" $row="1 / 3">Nome</HeadCell>
                    <HeadCell $col="3 / 6" $row="1" $center $sub>Quantidade</HeadCell>
                    <HeadCell $col="3" $row="2" $sub>Fibras no cabo</HeadCell>
                    <HeadCell $col="4" $row="2" $sub>Fibras por tubos</HeadCell>
                    <HeadCell $col="5" $row="2" $sub>Tubos</HeadCell>
                    <HeadCell $col="6" $row="1 / 3">Cores</HeadCell>
                    <HeadCell $col="7" $row="1 / 3" $last />
                  </GridHead>
                  <GridBody>
                    <GridRows>
                      {cables.map((c, i) => (
                        <GridRow key={c[1]} $odd={i % 2 === 1}>
                          {c.slice(0, 5).map((v, j) => <Cell key={j}>{v}</Cell>)}
                          <Cell $last><Swatch $color={c[5]} />{c[5]}</Cell>
                        </GridRow>
                      ))}
                    </GridRows>
                    <VScroll $w={16}><Arrow $dir="up" /></VScroll>
                  </GridBody>
                  <HScroll>
                    <Arrow $dir="left" />
                    <HScrollEnd><Arrow $dir="right" /><Arrow $dir="down" /></HScrollEnd>
                  </HScroll>
                </Grid>
              </DialogBody>
            </Dialog>
          </Viewport>
          <PageScroll>
            <Arrow $dir="up" />
            <Thumb />
            <Arrow $dir="down" $dark />
          </PageScroll>
        </Content>
        <Grip width="13" height="13" viewBox="0 0 13 13">
          <path d="M1 12L12 1M5 12L12 5M9 12L12 9" stroke="#222" />
        </Grip>
      </Window>
    </>
  );
}
